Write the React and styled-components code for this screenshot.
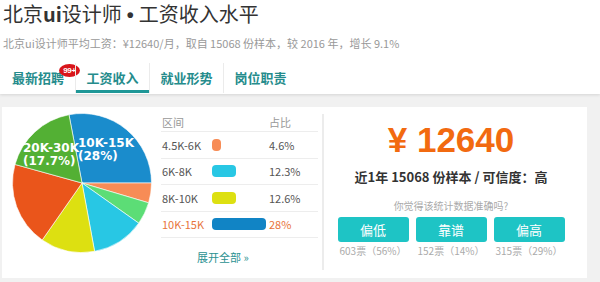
import React from "react";
import styled, { createGlobalStyle } from "styled-components";

const GlobalStyle = createGlobalStyle`
  body {
    margin: 0;
    background: #f1f1f1;
    font-family: "Noto Sans CJK SC", sans-serif;
  }
`;

const Page = styled.div`
  width: 600px;
  height: 282px;
  overflow: hidden;
`;

const Header = styled.div`
  background: #fff;
  height: 94px;
  padding-left: 3px;
  box-sizing: border-box;
  box-shadow: 0 1px 3px rgba(0, 0, 0, 0.12);
`;

const Title = styled.h1`
  margin: 0;
  font-size: 20px;
  line-height: 28px;
  font-weight: 400;
  color: #333;
  b {
    font-weight: 700;
  }
`;

const Dot = styled.span`
  font-family: "Liberation Sans", sans-serif;
  font-weight: 700;
  margin: 0 5px;
`;

const Sub = styled.p`
  margin: 6px 0 0;
  font-size: 11px;
  line-height: 16px;
  color: #999;
`;

const Tabs = styled.div`
  display: flex;
  margin: 12px 0 0 -2px;
`;

const Tab = styled.div`
  position: relative;
  width: 74px;
  height: 30px;
  box-sizing: border-box;
  line-height: 30px;
  text-align: center;
  font-size: 13px;
  font-weight: 700;
  color: #258c8c;
  border-left: ${(p) => (p.$sep ? "1px solid #ebebeb" : "none")};
  box-shadow: ${(p) => (p.$active ? "inset 0 -3px 0 #1f9797" : "none")};
`;

const Badge = styled.span`
  position: absolute;
  right: -5px;
  top: 1px;
  width: 21px;
  height: 13px;
  border-radius: 50%;
  background: #d8151b;
  color: #fff;
  font-family: "Liberation Sans", sans-serif;
  font-size: 8px;
  font-weight: 700;
  line-height: 13px;
  letter-spacing: -0.3px;
  text-align: center;
`;

const Panel = styled.div`
  display: flex;
  margin: 13px 13px 0 2px;
  height: 171px;
  background: #fff;
`;

const PieSvg = styled.svg`
  flex-shrink: 0;
  margin: 6px 9px 0 10px;
`;

const Table = styled.div`
  width: 157px;
  padding-top: 6px;
  flex-shrink: 0;
`;

const Row = styled.div`
  display: grid;
  grid-template-columns: 50px 57px 1fr;
  align-items: center;
  height: ${(p) => (p.$head ? "19px" : "26.5px")};
  box-sizing: border-box;
  border-bottom: 1px solid #ededed;
  font-size: 11px;
  color: ${(p) => (p.$head ? "#999" : p.$hl ? "#e8743b" : "#555")};
  padding-left: 1px;
`;

const Bar = styled.span`
  display: block;
  height: 12px;
  border-radius: 4px;
  background: ${(p) => p.$color};
`;

const More = styled.div`
  margin-top: 10px;
  padding-left: 36px;
  font-size: 11px;
  line-height: 18px;
  color: #2b9191;
`;

const Divider = styled.div`
  width: 2px;
  height: 156px;
  margin: 7px 0 0 4px;
  background: #ececec;
`;

const Right = styled.div`
  width: 254px;
  display: flex;
  flex-direction: column;
  align-items: center;
`;

const Price = styled.div`
  margin-top: 13px;
  font-family: "Liberation Sans", Arial, sans-serif;
  font-size: 35px;
  font-weight: 700;
  line-height: 40px;
  color: #f26a10;
`;

const Stat = styled.div`
  margin-top: 7px;
  font-size: 13px;
  font-weight: 700;
  line-height: 20px;
  color: #333;
`;

const Question = styled.div`
  margin-top: 11px;
  font-size: 10px;
  line-height: 16px;
  color: #aaa;
`;

const Votes = styled.div`
  display: flex;
  gap: 7px;
  margin-top: 3px;
`;

const Vote = styled.div`
  display: flex;
  flex-direction: column;
  align-items: center;
  gap: 2px;
`;

const VoteBtn = styled.div`
  width: 71px;
  height: 25px;
  border-radius: 3px;
  background: #1ec4c5;
  color: #fff;
  font-size: 13px;
  line-height: 25px;
  text-align: center;
`;

const VoteCount = styled.div`
  font-size: 10px;
  line-height: 14px;
  color: #aaa;
`;

const slices = [
  { p: 28, c: "#1a8ccc" },
  { p: 4.6, c: "#f78c56" },
  { p: 5.2, c: "#5cdd76" },
  { p: 12.3, c: "#28c7e4" },
  { p: 12.6, c: "#dde011" },
  { p: 19.6, c: "#ea551b" },
  { p: 17.7, c: "#53b034" },
];

const rows = [
  { r: "4.5K-6K", w: 9, c: "#f78c56", v: "4.6%" },
  { r: "6K-8K", w: 24, c: "#28c7e4", v: "12.3%" },
  { r: "8K-10K", w: 24, c: "#dde011", v: "12.6%" },
  { r: "10K-15K", w: 54, c: "#1184c5", v: "28%", hl: true },
];

const votes = [
  ["偏低", "603票（56%）"],
  ["靠谱", "152票（14%）"],
  ["偏高", "315票（29%）"],
];

function Pie() {
  const cx = 70;
  const cy = 70;
  const r = 69.5;
  let a = -10.8;
  const pt = (deg) => {
    const rad = ((deg - 90) * Math.PI) / 180;
    return [cx + r * Math.cos(rad), cy + r * Math.sin(rad)];
  };
  return (
    <PieSvg width="140" height="140" viewBox="0 0 140 140">
      {slices.map((s, i) => {
        const start = a;
        const end = a + (s.p * 360) / 100;
        a = end;
        const [x1, y1] = pt(start);
        const [x2, y2] = pt(end);
        const large = end - start > 180 ? 1 : 0;
        return (
          <path
            key={i}
            d={`M${cx} ${cy} L${x1} ${y1} A${r} ${r} 0 ${large} 1 ${x2} ${y2} Z`}
            fill={s.c}
            stroke="#fff"
            strokeWidth="0.6"
          />
        );
      })}
      <g fill="#fff" fontFamily="DejaVu Sans, sans-serif" fontSize="12" fontWeight="700">
        <text x="66" y="34">10K-15K</text>
        <text x="66" y="47">(28%)</text>
        <text x="11" y="39">20K-30K</text>
        <text x="11" y="52">(17.7%)</text>
      </g>
    </PieSvg>
  );
}

export default function App() {
  return (
    <Page>
      <GlobalStyle />
      <Header>
        <Title>
          北京<b>ui</b>设计师<Dot>•</Dot>工资收入水平
        </Title>
        <Sub>北京ui设计师平均工资：¥12640/月，取自 15068 份样本，较 2016 年，增长 9.1%</Sub>
        <Tabs>
          <Tab>
            最新招聘
            <Badge>99+</Badge>
          </Tab>
          <Tab $active $sep>工资收入</Tab>
          <Tab $sep>就业形势</Tab>
          <Tab $sep>岗位职责</Tab>
        </Tabs>
      </Header>
      <Panel>
        <Pie />
        <Table>
          <Row $head>
            <span>区间</span>
            <span />
            <span>占比</span>
          </Row>
          {rows.map((row) => (
            <Row key={row.r} $hl={row.hl}>
              <span>{row.r}</span>
              <Bar $color={row.c} style={{ width: row.w }} />
              <span>{row.v}</span>
            </Row>
          ))}
          <More>展开全部 »</More>
        </Table>
        <Divider />
        <Right>
          <Price>¥ 12640</Price>
          <Stat>近1年 15068 份样本 / 可信度：高</Stat>
          <Question>你觉得该统计数据准确吗?</Question>
          <Votes>
            {votes.map(([label, count]) => (
              <Vote key={label}>
                <VoteBtn>{label}</VoteBtn>
                <VoteCount>{count}</VoteCount>
              </Vote>
            ))}
          </Votes>
        </Right>
      </Panel>
    </Page>
  );
}
